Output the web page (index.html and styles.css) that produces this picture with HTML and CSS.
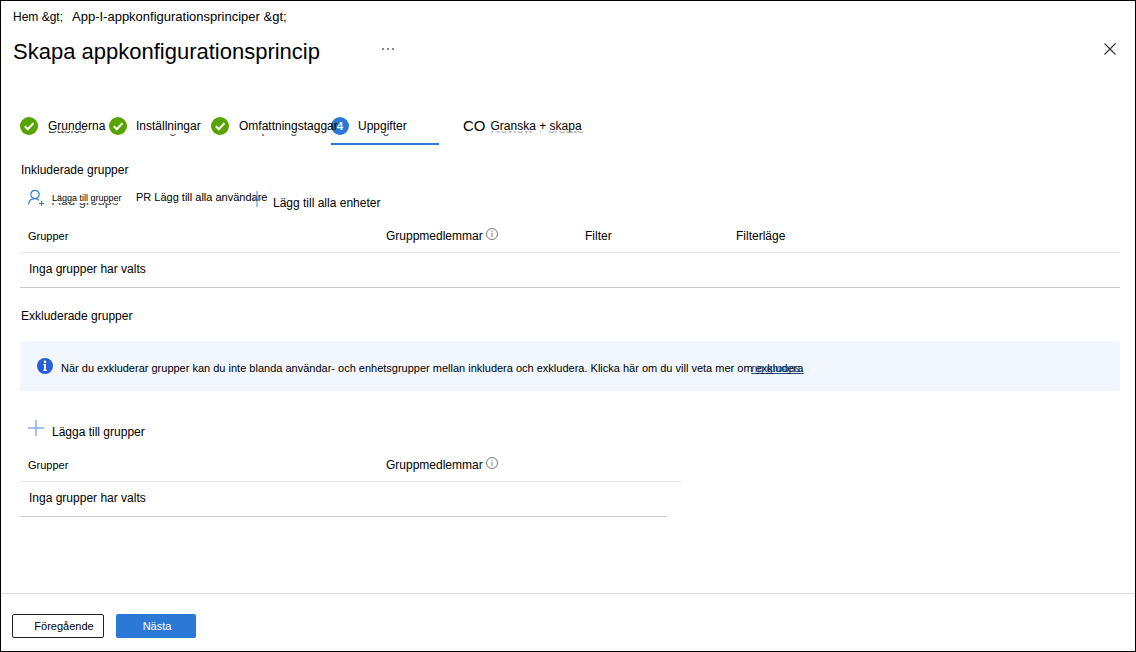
FILE: index.html
```html
<!DOCTYPE html>
<html lang="sv">
<head>
<meta charset="utf-8">
<title>Skapa appkonfigurationsprincip</title>
<link rel="stylesheet" href="styles.css">
</head>
<body class="page">
<header class="header">
  <nav class="crumbs"><a href="#">Hem &amp;gt;</a><a class="crumb-big" href="#">App-I-appkonfigurationsprinciper &amp;gt;</a></nav>
  <div class="title-row">
    <h1 class="title">Skapa appkonfigurationsprincip</h1>
    <button class="icon-btn more" aria-label="Mer"><svg width="12" height="2"><path d="M0 0h2v2H0zM5 0h2v2H5zM10 0h2v2h-2z" fill="#888"/></svg></button>
    <button class="icon-btn close" aria-label="Stäng"><svg width="12" height="12" viewBox="0 0 12 12"><path d="M.5.5l11 11M11.5.5l-11 11" stroke="#333" stroke-width="1.1"/></svg></button>
  </div>
</header>
<main class="main">
  <nav class="steps">
    <a class="step step-basics" href="#"><svg class="badge" viewBox="0 0 18 18"><circle cx="9" cy="9" r="9" fill="#57a300"/><path d="M4.8 9.3l3 3 5.6-6" fill="none" stroke="#fff" stroke-width="2"/></svg><span class="step-label">Grunderna<span class="ghost" aria-hidden="true">Basics</span></span></a>
    <a class="step step-settings" href="#"><svg class="badge" viewBox="0 0 18 18"><circle cx="9" cy="9" r="9" fill="#57a300"/><path d="M4.8 9.3l3 3 5.6-6" fill="none" stroke="#fff" stroke-width="2"/></svg><span class="step-label">Inställningar<span class="ghost ghost-low" aria-hidden="true">Settings</span></span></a>
    <a class="step step-scope" href="#"><svg class="badge" viewBox="0 0 18 18"><circle cx="9" cy="9" r="9" fill="#57a300"/><path d="M4.8 9.3l3 3 5.6-6" fill="none" stroke="#fff" stroke-width="2"/></svg><span class="step-label">Omfattningstaggar<span class="ghost ghost-low" aria-hidden="true">Scope tags</span></span></a>
    <a class="step step-current" href="#" aria-current="step"><span class="badge badge-number">4</span><span class="step-label">Uppgifter<span class="ghost ghost-low" aria-hidden="true">Assignments</span></span></a>
    <a class="step step-review" href="#"><span class="step-co">CO</span><span class="step-label">Granska + skapa<span class="ghost ghost-light" aria-hidden="true">Review + create</span></span></a>
  </nav>

  <section>
    <h2 class="section-title">Inkluderade grupper</h2>
    <div class="toolbar">
      <button class="tool tool-groups"><svg class="person" viewBox="0 0 18 18" fill="none" stroke="#2b7cd9" stroke-width="1.2"><circle cx="8" cy="5.5" r="4.200"/><path d="M1.500 15.500c.4-3.600 3-5.800 6.500-5.800 1.800 0 3 .6 4 1.600M14.500 12v5M12 14.500h5"/></svg><span class="tool-label small">Lägga till grupper<span class="ghost" aria-hidden="true">Add groups</span></span></button>
      <button class="tool tool-users">PR Lägg till alla användare<svg class="users-plus" viewBox="0 0 16 16"><path d="M8 0v16M4 8h8" stroke="#2b7cd9" stroke-opacity=".6" stroke-width="1.5"/></svg></button>
      <button class="tool tool-devices">Lägg till alla enheter</button>
    </div>
    <table class="table">
      <colgroup><col class="col-group"><col class="col-members"><col class="col-filter"><col></colgroup>
      <thead><tr><th class="narrow">Grupper</th><th>Gruppmedlemmar<svg class="info" viewBox="0 0 12 12"><circle cx="6" cy="6" r="5.500" fill="none" stroke="#777"/><path d="M6 5v4M6 2.700v1.300" stroke="#999" stroke-width="1.300"/></svg></th><th>Filter</th><th>Filterläge</th></tr></thead>
      <tbody><tr><td colspan="4">Inga grupper har valts</td></tr></tbody>
    </table>
  </section>

  <section>
    <h2 class="section-title section-excluded">Exkluderade grupper</h2>
    <div class="banner">
      <svg class="banner-icon" viewBox="0 0 16 16"><circle cx="8" cy="8" r="8" fill="#255fdd"/><circle cx="8" cy="3.900" r="1.300" fill="#fff"/><path d="M6.300 6.600H9M6.200 12.300h3.900" stroke="#fff" stroke-width="1" fill="none"/><path d="M8 6.200v6.300" stroke="#fff" stroke-width="2"/></svg>
      <p class="banner-text">När du exkluderar grupper kan du inte blanda användar- och enhetsgrupper mellan inkludera och exkludera. Klicka här om du vill veta mer om <a class="banner-link" href="#">exkludera<span class="link-ghost" aria-hidden="true">ng groups.</span></a></p>
    </div>
    <button class="tool tool-exclude"><svg class="plus" viewBox="0 0 16 16"><path d="M8 0v16M0 8h16" stroke="#2b7cd9" stroke-opacity=".6" stroke-width="1.500"/></svg><span>Lägga till grupper</span></button>
    <table class="table table-short">
      <colgroup><col class="col-group"><col><col class="col-tail"></colgroup>
      <thead><tr><th class="narrow">Grupper</th><th>Gruppmedlemmar<svg class="info" viewBox="0 0 12 12"><circle cx="6" cy="6" r="5.500" fill="none" stroke="#777"/><path d="M6 5v4M6 2.700v1.300" stroke="#999" stroke-width="1.300"/></svg></th><th></th></tr></thead>
      <tbody><tr><td colspan="2">Inga grupper har valts</td><td class="tail"></td></tr></tbody>
    </table>
  </section>
</main>
<footer class="footer">
  <button class="btn btn-back">Föregående</button>
  <button class="btn btn-next">Nästa</button>
</footer>
</body>
</html>
```
FILE: styles.css
```css
* { box-sizing: border-box; }
.page {
  margin: 0;
  min-height: 100vh;
  border: 1px solid #000;
  display: flex;
  flex-direction: column;
  background: #fff;
  color: #000;
  font: 12px/16px "Liberation Sans", Arial, sans-serif;
}
a { color: inherit; text-decoration: none; }
button { font: inherit; color: inherit; background: none; border: 0; padding: 0; cursor: pointer; }
h1, h2, p { margin: 0; font-weight: 400; }
svg { flex: none; }

.header { padding: 8px 18px 0 12px; }
.crumbs { display: flex; gap: 9px; white-space: nowrap; }
.crumb-big { font-size: 13px; }
.title-row { display: flex; align-items: center; margin-top: 12px; height: 30px; }
.title { font-size: 22px; line-height: 30px; width: 369px; white-space: nowrap; }
.icon-btn { display: flex; padding: 0; }
.more { margin-bottom: 6px; }
.close { margin: 0 1px 6px auto; }

.main { flex: 1; padding: 0 15px 0 19px; }
.steps { display: flex; margin-top: 41px; height: 37px; }
.step { display: flex; align-items: center; height: 36px; white-space: nowrap; }
.step-label { position: relative; }
.badge { width: 18px; height: 18px; flex: none; }
.step-basics { width: 89px; gap: 10px; }
.step-settings { width: 102px; gap: 9px; }
.step-scope { width: 120px; gap: 10px; }
.step-current { width: 108px; height: 37px; gap: 9px; border-bottom: 2px solid #2b78d7; padding-top: 1px; }
.step-review { margin-left: 24px; gap: 5px; }
.step-co { font-size: 15px; }
.badge-number {
  border-radius: 50%;
  background: #2b78d7;
  color: #fff;
  font-size: 11px;
  font-weight: 700;
  line-height: 18px;
  text-align: center;
}
.ghost {
  position: absolute;
  left: 0;
  top: 3px;
  color: #444;
  font-size: 13px;
  clip-path: inset(10px 0 0 0);
}
.ghost-low { clip-path: inset(13px 0 0 0); }
.ghost-light { color: #aaa; }

.section-title { font-size: 12px; line-height: 16px; margin: 17px 0 0 1px; }
.toolbar { display: flex; height: 42px; padding-left: 7px; white-space: nowrap; }
.tool { display: flex; align-items: center; height: 16px; }
.tool-groups { width: 109px; gap: 7px; margin-top: 12px; }
.person { width: 18px; height: 18px; }
.tool-label { position: relative; }
.small { font-size: 9px; }
.tool-users, .table .narrow, .banner-text, .btn { font-size: 11px; }
.tool-users { position: relative; width: 137px; margin-top: 11px; }
.users-plus { position: absolute; right: 8px; top: 2px; width: 16px; height: 16px; }
.tool-devices { margin-top: 17px; }

.table { width: 100%; border-collapse: collapse; table-layout: fixed; }
.table th, .table td { padding: 0 0 0 8px; text-align: left; font-weight: 400; white-space: nowrap; }
.table th { height: 32px; border-bottom: 1px solid #e6e6e6; }
.table td { height: 35px; padding: 0 0 2px 9px; border-bottom: 1px solid #c8c8c8; }
.info { width: 12px; height: 12px; margin-left: 3px; vertical-align: 0; }
.col-group { width: 358px; }
.col-members { width: 199px; }
.col-filter { width: 151px; }
.col-tail { width: 14px; }
.table-short { width: 661px; margin-top: 6px; }
.table .tail { border-bottom: 0; }

.section-excluded { margin-top: 20px; }
.banner {
  display: flex;
  align-items: center;
  gap: 8px;
  min-height: 50px;
  margin-top: 17px;
  padding: 0 17px;
  border-radius: 2px;
  background: #f1f6ff;
}
.banner-icon { width: 16px; height: 16px; }
.banner-text { padding-top: 4px; }
.banner-link { position: relative; text-decoration: underline; }
.link-ghost { position: absolute; right: 0; top: -2px; color: #164a84; text-decoration: underline; white-space: nowrap; }
.tool-exclude { margin: 29px 0 0 8px; height: 24px; gap: 8px; }
.tool-exclude span { padding-top: 1px; }
.plus { width: 16px; height: 16px; margin-bottom: 7px; }

.footer { display: flex; gap: 12px; border-top: 1px solid #dcdcdc; padding: 20px 11px 13px; }
.btn { height: 24px; border-radius: 2px; }
.btn-back { width: 92px; padding-left: 12px; border: 1px solid #222; }
.btn-next { width: 80px; padding-left: 2px; background: #2b78d7; color: #fff; }
```
